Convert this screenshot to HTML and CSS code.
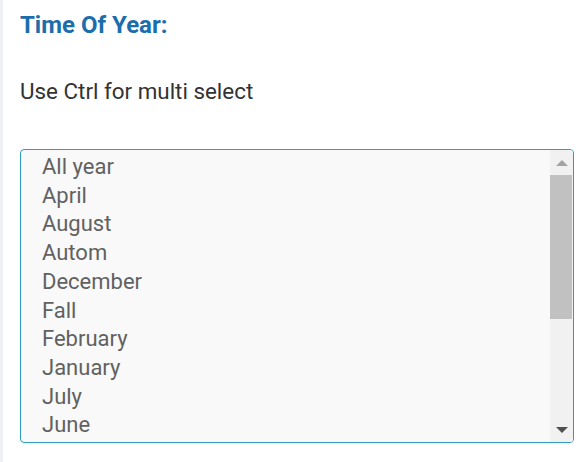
FILE: index.html
```html
<!DOCTYPE html>
<html>
<head>
<meta charset="utf-8">
<link rel="stylesheet" href="styles.css">
</head>
<body>
<div class="page">
  <h2 class="title">Time Of Year:</h2>
  <p class="hint">Use Ctrl for multi select</p>
  <div class="listbox">
    <div class="options">
      <div class="opt">All year</div>
      <div class="opt">April</div>
      <div class="opt">August</div>
      <div class="opt">Autom</div>
      <div class="opt">December</div>
      <div class="opt">Fall</div>
      <div class="opt">February</div>
      <div class="opt">January</div>
      <div class="opt">July</div>
      <div class="opt">June</div>
    </div>
    <div class="scrollbar">
      <div class="sb-btn"><span class="arrow-up"></span></div>
      <div class="sb-track"><div class="sb-thumb"></div></div>
      <div class="sb-btn"><span class="arrow-down"></span></div>
    </div>
  </div>
</div>
</body>
</html>
```

FILE: styles.css
```css
html, body {
  margin: 0;
  padding: 0;
  background: #ffffff;
  height: 100%;
}
.page {
  box-sizing: border-box;
  min-height: 100%;
  border-left: 3px solid #eef0f3;
  padding: 10px 14px 0 17px;
  font-family: Roboto, "Liberation Sans", sans-serif;
}
.title {
  margin: 0;
  font-size: 24px;
  font-weight: 700;
  line-height: 30px;
  color: #1b6dab;
}
.hint {
  margin: 37px 0 0 0;
  font-size: 22.4px;
  line-height: 28px;
  color: #333333;
}
.listbox {
  margin-top: 44px;
  display: flex;
  height: 294px;
  box-sizing: border-box;
  border: 1px solid #2b9dc1;
  border-radius: 4px;
  background: #f9f9f9;
  overflow: hidden;
}
.options {
  flex: 1;
  padding: 3px 0 0 21px;
}
.opt {
  font-size: 22px;
  line-height: 28.7px;
  color: #616161;
}
.scrollbar {
  width: 23px;
  display: flex;
  flex-direction: column;
  background: #f1f1f1;
}
.sb-btn {
  height: 25px;
  display: flex;
  align-items: center;
  justify-content: center;
}
.sb-track {
  flex: 1;
  padding: 0 1px 0 0;
}
.sb-thumb {
  height: 144px;
  background: #c1c1c1;
}
.arrow-up {
  width: 0;
  height: 0;
  border-left: 6px solid transparent;
  border-right: 6px solid transparent;
  border-bottom: 6px solid #a3a3a3;
}
.arrow-down {
  width: 0;
  height: 0;
  border-left: 6px solid transparent;
  border-right: 6px solid transparent;
  border-top: 6px solid #505050;
}
```
